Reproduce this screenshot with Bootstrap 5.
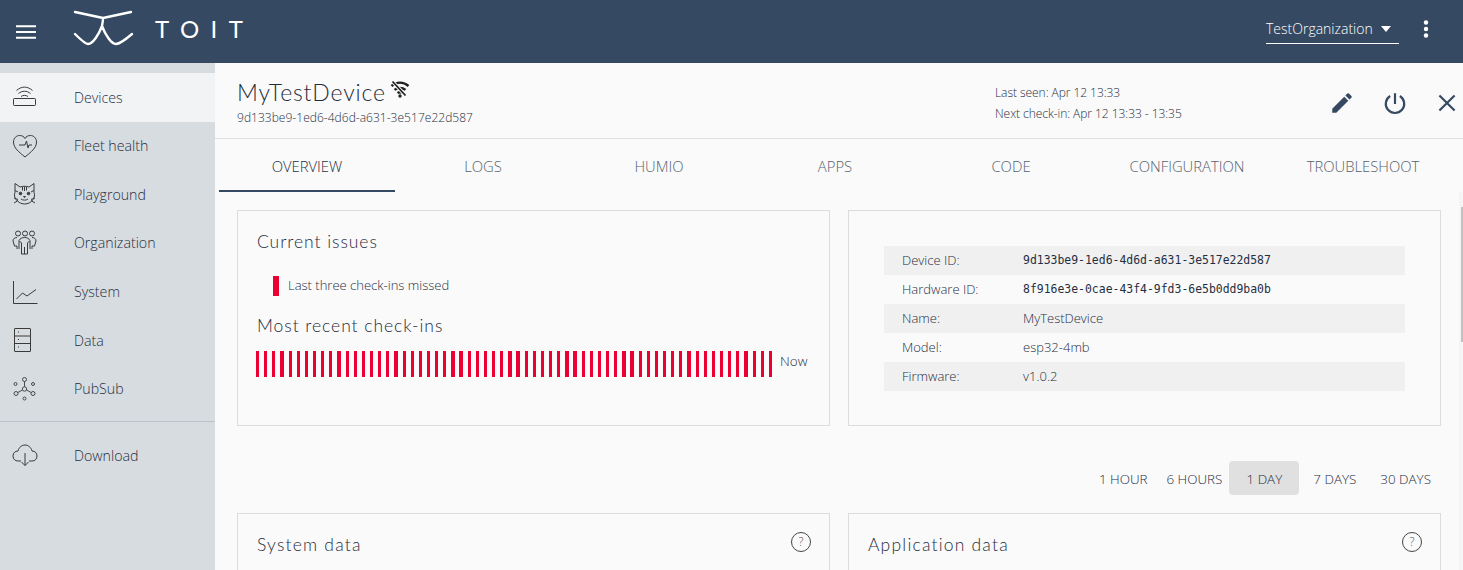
<!DOCTYPE html>
<html lang="en">
<head>
    <meta charset="UTF-8">
    <title>Toit console</title>
    <link href="https://cdn.jsdelivr.net/npm/bootstrap@5.3.0/dist/css/bootstrap.min.css" rel="stylesheet">
    <style>
        html, body { height: 570px; overflow: hidden; }
        body { font-family: "Open Sans", sans-serif; font-size: 14.200px; font-weight: 300; color: #1f2f43; background: #fafafa; }
        .topbar { height: 63px; background: #364962; color: #fff; }
        .burger { width: 20px; margin-left: 16px; margin-right: 37px; }
        .logo-mark { margin-bottom: 5px; }
        .logo-word { font-family: Lato, sans-serif; font-size: 24px; font-weight: 400; letter-spacing: 11.500px; margin-left: 20px; margin-bottom: 5px; }
        .org-select { width: 133px; height: 30px; margin-top: 14px; align-self: flex-start; font-size: 14px; font-weight: 300; border-bottom: 1px solid #fff; margin-right: 24px; padding-right: 8px; }
        .org-caret { width: 0; height: 0; border: 5.500px solid transparent; border-top: 6px solid #fff; border-bottom-width: 0; }
        .kebab { margin-right: 34px; margin-bottom: 5px; }
        .side { width: 215px; height: 507px; background: #d7dce0; flex: none; padding-top: 10px; }
        .side-item { height: 48.600px; color: #1f2f43; text-decoration: none; }
        .side-item.active-item { background: #f1f3f5; }
        .side-item svg { width: 26px; height: 26px; margin-left: 12px; margin-right: 36px; flex: none; }
        .side-rule { border-top: 1px solid #bcc2c8; margin: 8px 0 9px; }
        .main { flex: 1 1 auto; min-width: 0; position: relative; }
        .dev-head { height: 76px; border-bottom: 1px solid #e0e0e0; padding-left: 22px; }
        .dev-title { font-family: Lato, sans-serif; font-size: 23px; font-weight: 300; letter-spacing: .850px; line-height: 28px; color: #1f2c3c; }
        .wifi-off { margin-top: 2px; }
        .dev-id { font-size: 12px; letter-spacing: .030px; margin-top: 3px; }
        .dev-left { width: 758px; padding-top: 15px; }
        .dev-seen { width: 334px; font-size: 12px; letter-spacing: -.050px; line-height: 21px; padding-top: 19px; }
        .dev-actions { gap: 26.500px; padding-top: 27px; }
        .tabbar { height: 53px; margin-left: 4px; }
        .tab-btn { width: 176px; flex: none; line-height: 54px; text-align: center; color: #56626f; font-size: 14.800px; }
        .tab-btn.tab-on { color: #1f2f43; border-bottom: 2px solid #364962; }
        .panel-row { padding: 18px 22px 0 22px; gap: 18px; }
        .panel { border: 1px solid #dcdcdc; flex: 1 1 0; background: #fafafa; }
        .top-panel { height: 216px; }
        .panel-head { font-family: Lato, sans-serif; font-size: 17.500px; font-weight: 300; letter-spacing: .950px; color: #1f2c3c; line-height: 22px; }
        .bottom-panel .panel-head { letter-spacing: 1.200px; }
        .issue-row { font-size: 13px; height: 22px; padding-left: 16px; }
        .red-tick { width: 6px; height: 20px; background: #eb0034; margin-right: 9px; }
        .bars { width: 516px; height: 26px; margin-top: 3px; background: repeating-linear-gradient(90deg, #eb0034 0 3.200px, transparent 3.200px 8.140px); }
        .now-label { font-size: 13.500px; margin-left: 8px; margin-top: 3px; line-height: 20px; }
        .info-list { margin: 35px 35px 0; font-size: 13px; }
        .info-line { height: 29px; padding-left: 18px; padding-top: 1px; }
        .info-line:nth-child(odd) { background: #f0f0f0; }
        .info-line:last-child { padding-top: 0; }
        .info-key { width: 121px; }
        .info-mono { font-family: "DejaVu Sans Mono", monospace; font-size: 11.450px; font-weight: 400; letter-spacing: 0; }
        .range-bar { padding: 35px 32px 0 0; height: 87px; }
        .range-btn { height: 34px; line-height: 36px; font-size: 13.400px; border-radius: 4px; margin-left: 19px; }
        .range-btn.range-on { background: #e0e0e0; width: 70px; text-align: center; margin-left: 7px; margin-right: -5px; }
        .range-btn:last-child { margin-left: 24px; }
        .bottom-panel { height: 80px; padding: 20px 18px 20px 19px; }
        .help-mark { width: 20px; height: 20px; border: 1px solid #444; border-radius: 50%; font-size: 12px; line-height: 18px; text-align: center; color: #555; margin-top: -2px; }
        .scroll-track { position: absolute; right: 0; top: 129px; width: 4px; height: 378px; background: #f5f5f5; }
        .scroll-thumb { position: absolute; right: 0; top: 144px; width: 2px; height: 135px; background: #c1c1c1; }
    </style>
</head>
<body>
    <div class="topbar d-flex align-items-center">
        <svg class="burger" viewBox="0 0 20 14" height="14"><path d="M0 1.200h20M0 7h20M0 12.800h20" stroke="#fff" stroke-width="2"/></svg>
        <svg class="logo-mark" width="62" height="38" viewBox="0 0 62 38" fill="none" stroke="#fff" stroke-width="2.400" stroke-linecap="round" stroke-linejoin="round"><path d="M2 2l28 6 28-6M30 8c0 3-.500 5-1 8M29 16c-3 8-9 18-14 18-3 0-7-4-13-10M29 16c3 8 9 18 14 18 3 0 9-4 16-10"/></svg>
        <span class="logo-word">TOIT</span>
        <div class="ms-auto org-select d-flex align-items-center justify-content-between">
            <span>TestOrganization</span><span class="org-caret"></span>
        </div>
        <svg class="kebab" width="6" height="18" viewBox="0 0 6 18" fill="#fff"><circle cx="3" cy="2.500" r="2.200"/><circle cx="3" cy="9" r="2.200"/><circle cx="3" cy="15.500" r="2.200"/></svg>
    </div>
    <div class="d-flex">
        <nav class="side">
            <a class="side-item active-item d-flex align-items-center" href="#">
                <svg viewBox="0 0 26 26" fill="none" stroke="#3a3a3a" stroke-width="1"><rect x="1.500" y="14.500" width="22" height="7" rx=".800"/><path d="M4.500 6.500c5-4.500 11-4.500 16 0M6.500 9.500c3.500-3 8.500-3 12 0M9 12.500c2-1.500 5-1.500 7 0"/></svg>Devices</a>
            <a class="side-item d-flex align-items-center" href="#">
                <svg viewBox="0 0 26 26" fill="none" stroke="#3a3a3a" stroke-width="1"><path d="M13 24C7 19 1.500 15 1.500 9c0-4 3-6.500 6-6.500 2.500 0 4.500 1 5.500 3 1-2 3-3 5.500-3 3 0 6 2.500 6 6.500 0 6-5.500 10-11.500 15z"/><path d="M7 12h6l1.500-4 1.500 7 1-3h3"/></svg>Fleet health</a>
            <a class="side-item d-flex align-items-center" href="#">
                <svg viewBox="0 0 26 26" fill="none" stroke="#3a3a3a" stroke-width="1"><path d="M3 2.500l5 3.500c3-1 6-1 9 0l5-3.500v9c1 2 .500 5-1 7-2 3-5 4.500-8.500 4.500S6 21 4 18.500c-1.500-2-2-5-1-7z"/><path d="M10.500 6v3.500M12.500 5.500v4.500M14.500 6v3.500M3 9.500l3 1.500M22 9.500l-3 1.500"/><circle cx="8.500" cy="12.500" r="1.300" fill="#3a3a3a"/><circle cx="16.500" cy="12.500" r="1.300" fill="#3a3a3a"/><path d="M11.500 15.500h2l-1 1.200zM9 18c2 1.500 5 1.500 7 0M2 17l4 1.500M23 17l-4 1.500M2 22l4-2.500M23 22l-4-2.500"/></svg>Playground</a>
            <a class="side-item d-flex align-items-center" href="#">
                <svg viewBox="0 0 26 26" fill="none" stroke="#3a3a3a" stroke-width="1"><circle cx="6" cy="3.500" r="2.500"/><circle cx="13" cy="3.500" r="2.500"/><circle cx="20" cy="3.500" r="2.500"/><path d="M5 19v-3H2.500L1 11c0-2.500 2-3.500 4-3.500M20 19v-3h2.500l1.500-5c0-2.500-2-3.500-4-3.500M9.500 24V13L7 10.500c1-2 3-3 5.500-3s4.500 1 5.500 3L15.500 13v11zM12.500 17v7M7 11v8M18 11v8"/></svg>Organization</a>
            <a class="side-item d-flex align-items-center" href="#">
                <svg viewBox="0 0 26 26" fill="none" stroke="#3a3a3a" stroke-width="1"><path d="M1.500 2v22.500h24"/><path d="M4.500 20l6-6 4.500 3L24 10.500"/></svg>System</a>
            <a class="side-item d-flex align-items-center" href="#">
                <svg viewBox="0 0 26 26" fill="none" stroke="#3a3a3a" stroke-width="1"><rect x="2.500" y="1.500" width="16" height="23" rx=".500"/><path d="M2.500 9h16M2.500 16.500h16"/><path d="M6 5h1M6 12.500h1M6 20h1" stroke-width="1.200"/></svg>Data</a>
            <a class="side-item d-flex align-items-center" href="#">
                <svg viewBox="0 0 26 26" fill="none" stroke="#4a4a4a" stroke-width="1"><circle cx="12.500" cy="13" r="2.200"/><circle cx="12.500" cy="3.500" r="2"/><circle cx="4" cy="17.500" r="2"/><circle cx="21" cy="17.500" r="2"/><circle cx="12.500" cy="22.500" r="1.500"/><circle cx="3.500" cy="8" r="1.500"/><circle cx="21" cy="8" r="1.500"/><path d="M12.500 5.500v5.300M10.500 14l-4.700 2.500M14.500 14l4.700 2.500"/></svg>PubSub</a>
            <div class="side-rule"></div>
            <a class="side-item d-flex align-items-center" href="#">
                <svg viewBox="0 0 26 26" fill="none" stroke="#3a3a3a" stroke-width="1"><path d="M9 19H6c-3 0-5-2-5-5s2-5 5-5c1-4 4-6 7-6s6 2 7 6c3 0 5 2 5 5s-2 5-5 5h-3"/><path d="M13 11v12.500M9.500 20l3.500 3.500 3.500-3.500"/></svg>Download</a>
        </nav>
        <div class="main">
            <div class="dev-head d-flex">
                <div class="dev-left">
                    <div class="dev-title d-flex">MyTestDevice
                        <svg class="ms-1 wifi-off" width="20" height="20" viewBox="0 0 20 20" fill="none" stroke="#222" stroke-width="2.400"><path d="M1.500 6c5-4.500 12-4.500 17 0M4.500 9.800c3-2.500 8-2.500 11 0M7.500 13c1.500-1 3.500-1 5 0"/><path d="M2.500 1.500l13 14" stroke="#fafafa" stroke-width="3.500"/><path d="M2.500 1.500l13 14" stroke-width="1.800"/><circle cx="10" cy="16" r="1.700" fill="#222" stroke="none"/></svg>
                    </div>
                    <div class="dev-id">9d133be9-1ed6-4d6d-a631-3e517e22d587</div>
                </div>
                <div class="dev-seen">
                    <div>Last seen: Apr 12 13:33</div>
                    <div>Next check-in: Apr 12 13:33 - 13:35</div>
                </div>
                <div class="dev-actions d-flex">
                    <svg width="26" height="26" viewBox="0 0 24 24" fill="#364962"><path d="M3 17.250V21h3.750L17.810 9.940l-3.750-3.750L3 17.250zM20.710 7.040a1 1 0 000-1.410l-2.340-2.340a1 1 0 00-1.410 0l-1.830 1.830 3.750 3.750 1.830-1.830z"/></svg>
                    <svg width="26" height="26" viewBox="0 0 24 24" fill="none" stroke="#364962" stroke-width="2"><path d="M12 3v10M7.500 5.500a8.500 8.500 0 109 0"/></svg>
                    <svg width="26" height="26" viewBox="0 0 24 24" fill="none" stroke="#364962" stroke-width="2"><path d="M5 5l14 14M19 5L5 19"/></svg>
                </div>
            </div>
            <div class="tabbar d-flex">
                <div class="tab-btn tab-on">OVERVIEW</div>
                <div class="tab-btn">LOGS</div>
                <div class="tab-btn">HUMIO</div>
                <div class="tab-btn">APPS</div>
                <div class="tab-btn">CODE</div>
                <div class="tab-btn">CONFIGURATION</div>
                <div class="tab-btn">TROUBLESHOOT</div>
            </div>
            <div class="panel-row d-flex">
                <div class="panel top-panel">
                    <div class="panel-head" style="padding:20px 19px 0">Current issues</div>
                    <div class="issue-row d-flex align-items-center" style="margin:22px 0 0 19px">
                        <span class="red-tick"></span>Last three check-ins missed
                    </div>
                    <div class="panel-head" style="padding:18px 19px 0">Most recent check-ins</div>
                    <div class="d-flex align-items-start" style="margin:11px 0 0 18px">
                        <div class="bars"></div><span class="now-label">Now</span>
                    </div>
                </div>
                <div class="panel top-panel">
                    <div class="info-list">
                        <div class="info-line d-flex align-items-center"><span class="info-key">Device ID:</span><span class="info-mono">9d133be9-1ed6-4d6d-a631-3e517e22d587</span></div>
                        <div class="info-line d-flex align-items-center"><span class="info-key">Hardware ID:</span><span class="info-mono">8f916e3e-0cae-43f4-9fd3-6e5b0dd9ba0b</span></div>
                        <div class="info-line d-flex align-items-center"><span class="info-key">Name:</span><span>MyTestDevice</span></div>
                        <div class="info-line d-flex align-items-center"><span class="info-key">Model:</span><span>esp32-4mb</span></div>
                        <div class="info-line d-flex align-items-center"><span class="info-key">Firmware:</span><span>v1.0.2</span></div>
                    </div>
                </div>
            </div>
            <div class="range-bar d-flex justify-content-end">
                <div class="range-btn">1 HOUR</div>
                <div class="range-btn">6 HOURS</div>
                <div class="range-btn range-on">1 DAY</div>
                <div class="range-btn">7 DAYS</div>
                <div class="range-btn">30 DAYS</div>
            </div>
            <div class="panel-row d-flex" style="padding-top:0">
                <div class="panel bottom-panel d-flex justify-content-between"><div class="panel-head">System data</div><div class="help-mark">?</div></div>
                <div class="panel bottom-panel d-flex justify-content-between"><div class="panel-head">Application data</div><div class="help-mark">?</div></div>
            </div>
            <div class="scroll-track"></div>
            <div class="scroll-thumb"></div>
        </div>
    </div>
    <script src="https://cdn.jsdelivr.net/npm/bootstrap@5.3.0/dist/js/bootstrap.bundle.min.js"></script>
</body>
</html>
